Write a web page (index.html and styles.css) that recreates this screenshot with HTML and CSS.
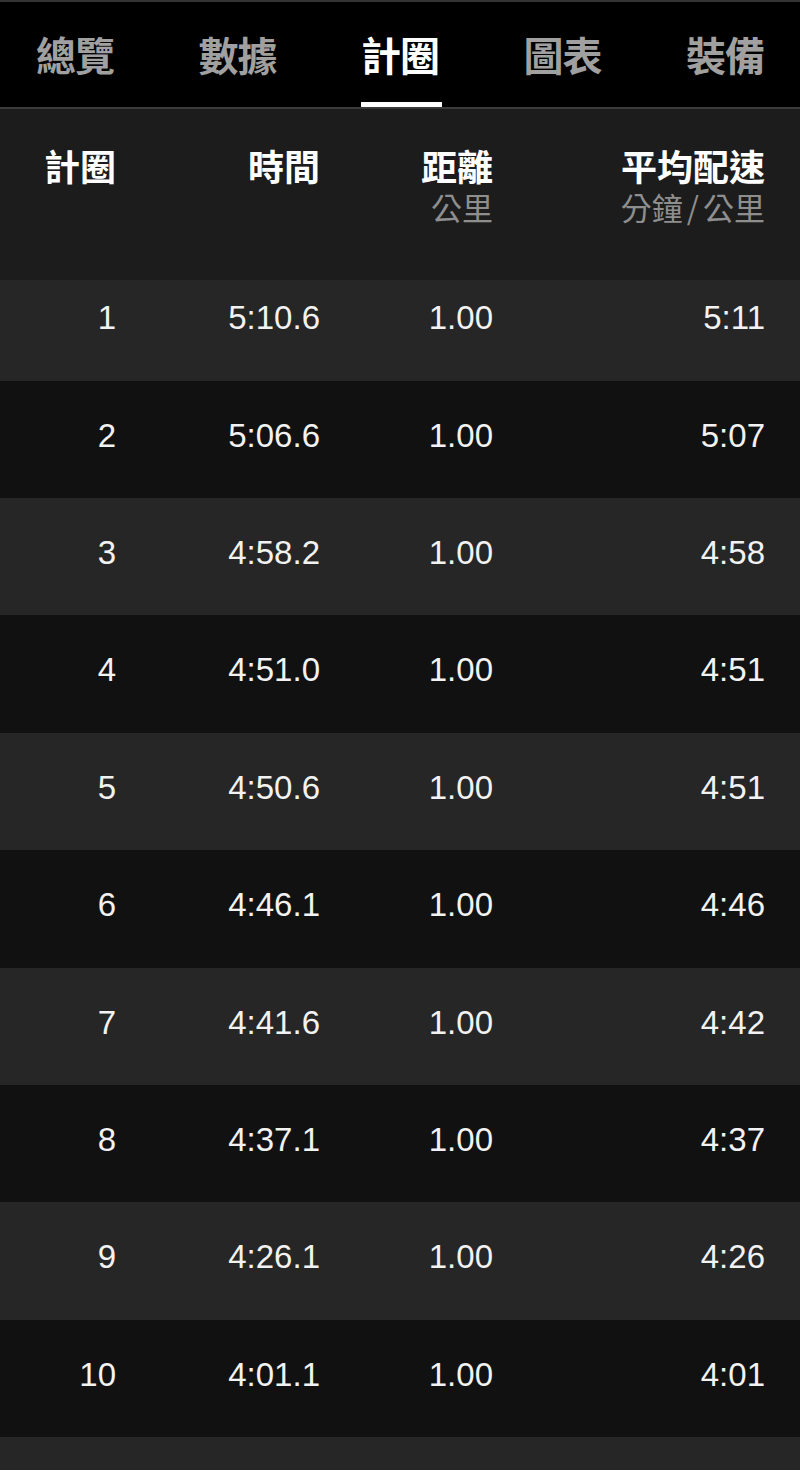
FILE: index.html
```html
<!DOCTYPE html>
<html lang="zh-Hant">
<head>
<meta charset="utf-8">
<link rel="stylesheet" href="styles.css">
</head>
<body>
<div class="screen">
  <nav class="tabs">
    <div class="tab">總覽</div>
    <div class="tab">數據</div>
    <div class="tab active">計圈</div>
    <div class="tab">圖表</div>
    <div class="tab">裝備</div>
  </nav>
  <div class="head">
    <div class="hcell"><div class="ht">計圈</div></div>
    <div class="hcell"><div class="ht">時間</div></div>
    <div class="hcell"><div class="ht">距離</div><div class="hs">公里</div></div>
    <div class="hcell"><div class="ht">平均配速</div><div class="hs">分鐘<span class="sl">/</span>公里</div></div>
  </div>
  <div class="rows">
    <div class="row first"><span>1</span><span>5:10.6</span><span>1.00</span><span>5:11</span></div>
    <div class="row"><span>2</span><span>5:06.6</span><span>1.00</span><span>5:07</span></div>
    <div class="row"><span>3</span><span>4:58.2</span><span>1.00</span><span>4:58</span></div>
    <div class="row"><span>4</span><span>4:51.0</span><span>1.00</span><span>4:51</span></div>
    <div class="row"><span>5</span><span>4:50.6</span><span>1.00</span><span>4:51</span></div>
    <div class="row"><span>6</span><span>4:46.1</span><span>1.00</span><span>4:46</span></div>
    <div class="row"><span>7</span><span>4:41.6</span><span>1.00</span><span>4:42</span></div>
    <div class="row"><span>8</span><span>4:37.1</span><span>1.00</span><span>4:37</span></div>
    <div class="row"><span>9</span><span>4:26.1</span><span>1.00</span><span>4:26</span></div>
    <div class="row"><span>10</span><span>4:01.1</span><span>1.00</span><span>4:01</span></div>
    <div class="row tail"></div>
  </div>
</div>
</body>
</html>
```
FILE: styles.css
```css
html, body {
  margin: 0;
  padding: 0;
  background: #262626;
}
.screen {
  width: 800px;
  height: 1470px;
  overflow: hidden;
  background: #262626;
  font-family: "Liberation Sans", "Noto Sans CJK TC", sans-serif;
  color: #f2f2f2;
  border-top: 2px solid #333;
  box-sizing: border-box;
  position: relative;
}
.tabs {
  background: #000;
  height: 105px;
  display: flex;
  justify-content: space-between;
  padding: 0 36px;
  border-bottom: 2px solid #3a3a3a;
}
.tab {
  position: relative;
  font-family: "Noto Sans CJK TC", sans-serif;
  font-weight: 700;
  font-size: 40px;
  line-height: 48px;
  padding-top: 28px;
  color: #a0a0a0;
  letter-spacing: -1px;
}
.tab.active {
  color: #fff;
}
.tab.active::after {
  content: "";
  position: absolute;
  left: 0;
  right: -3px;
  bottom: 0;
  height: 5px;
  background: #fff;
}
.head {
  background: #1c1c1c;
  height: 171px;
  box-sizing: border-box;
  padding: 35px 35px 0 0;
  display: grid;
  grid-template-columns: 116px 204px 173px 272px;
  text-align: right;
}
.ht {
  font-family: "Noto Sans CJK TC", sans-serif;
  font-weight: 700;
  font-size: 36px;
  line-height: 42px;
  color: #fff;
}
.hs {
  font-family: "Noto Sans CJK TC", sans-serif;
  font-size: 31px;
  line-height: 34px;
  margin-top: 4px;
  color: #8e8e8e;
}
.sl {
  margin: 0 4px;
}
.rows {
  display: flex;
  flex-direction: column;
}
.row {
  display: grid;
  grid-template-columns: 116px 204px 173px 272px;
  padding: 35px 35px 0 0;
  height: 117.4px;
  box-sizing: border-box;
  text-align: right;
  font-size: 33px;
  line-height: 40px;
  color: #f2f2f2;
  background: #262626;
}
.row:nth-child(even) {
  background: #111;
}
.row.first {
  height: 100.6px;
  padding-top: 18px;
}
.row.tail {
  height: 40px;
  border-bottom: 3px solid #3a3a3a;
}
```
